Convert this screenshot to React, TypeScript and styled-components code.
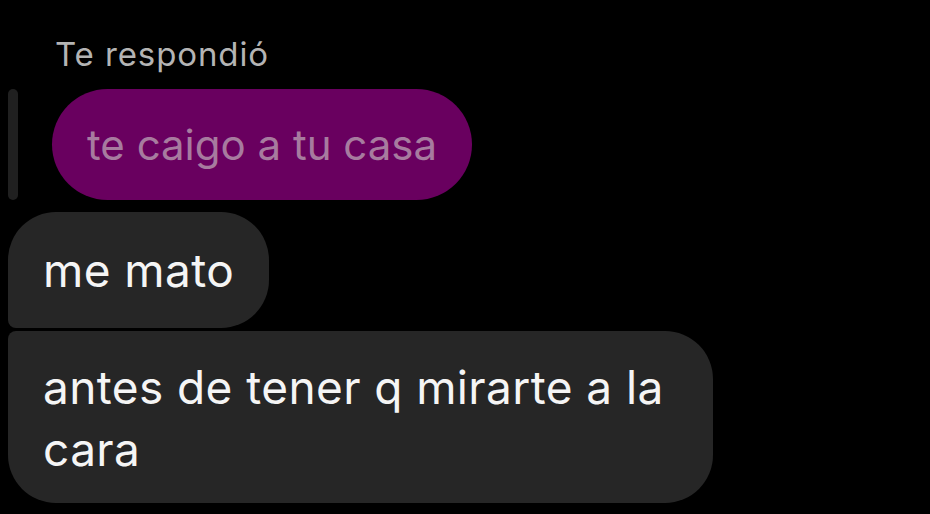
import React from "react";
import styled, { createGlobalStyle } from "styled-components";

const Global = createGlobalStyle`
  html, body { margin: 0; padding: 0; background: #000; }
  body { font-family: Inter, Roboto, "Noto Sans", Arial, sans-serif; }
`;

const Page = styled.div`
  width: 930px;
  height: 514px;
  background: #000;
  box-sizing: border-box;
  padding: 29px 0 0 8px;
  display: flex;
  flex-direction: column;
  overflow: hidden;
`;

const ReplyLabel = styled.div`
  margin-left: 47px;
  color: #b4b4b4;
  font-size: 33px;
  letter-spacing: 0.9px;
  line-height: 50px;
  height: 50px;
`;

const ReplyRow = styled.div`
  display: flex;
  align-items: stretch;
  gap: 34px;
  margin-top: 10px;
`;

const ReplyBar = styled.div`
  width: 10px;
  border-radius: 5px;
  background: #202020;
`;

const QuotedBubble = styled.div`
  background: #69005f;
  color: #a77b9f;
  border-radius: 56px;
  padding: 25px 35px;
  font-size: 42px;
  line-height: 61px;
`;

const Bubble = styled.div<{ $first?: boolean }>`
  align-self: flex-start;
  max-width: 705px;
  box-sizing: border-box;
  background: #262626;
  color: #f5f5f5;
  font-size: 46px;
  letter-spacing: 0.4px;
  line-height: 62px;
  padding: ${(p) => (p.$first ? "27px 35px" : "25px 35px 23px")};
  border-radius: ${(p) => (p.$first ? "48px 48px 48px 8px" : "8px 48px 48px 48px")};
  margin-top: ${(p) => (p.$first ? "12px" : "3px")};
`;

export default function App() {
  return (
    <>
      <Global />
      <Page>
        <ReplyLabel>Te respondió</ReplyLabel>
        <ReplyRow>
          <ReplyBar />
          <QuotedBubble>te caigo a tu casa</QuotedBubble>
        </ReplyRow>
        <Bubble $first>me mato</Bubble>
        <Bubble>antes de tener q mirarte a la cara</Bubble>
      </Page>
    </>
  );
}
